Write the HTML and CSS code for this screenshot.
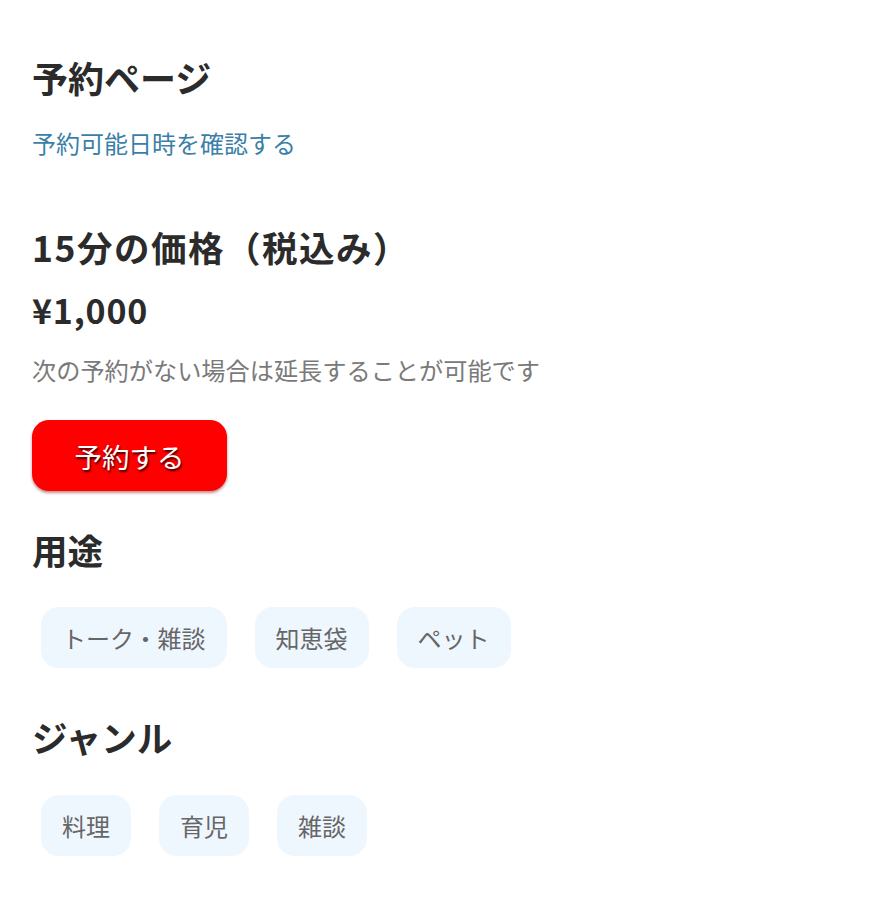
FILE: index.html
```html
<!DOCTYPE html>
<html lang="ja">
<head>
<meta charset="utf-8">
<title>予約ページ</title>
<link rel="stylesheet" href="styles.css">
</head>
<body>
<main class="page">
  <h1 class="title">予約ページ</h1>
  <a class="link" href="#">予約可能日時を確認する</a>

  <h2 class="heading price-heading">15分の価格（税込み）</h2>
  <p class="price">¥1,000</p>
  <p class="note">次の予約がない場合は延長することが可能です</p>
  <button class="reserve" type="button">予約する</button>

  <h2 class="heading section">用途</h2>
  <ul class="chips">
    <li class="chip">トーク・雑談</li>
    <li class="chip">知恵袋</li>
    <li class="chip">ペット</li>
  </ul>

  <h2 class="heading section genre">ジャンル</h2>
  <ul class="chips genre-chips">
    <li class="chip">料理</li>
    <li class="chip">育児</li>
    <li class="chip">雑談</li>
  </ul>
</main>
</body>
</html>
```
FILE: styles.css
```css
* { box-sizing: border-box; }
html, body { margin: 0; padding: 0; background: #ffffff; }
body {
  font-family: "Noto Sans CJK JP", "Noto Sans", sans-serif;
  color: #2b2b2b;
}
.page {
  padding: 52px 32px 40px 32px;
  display: flex;
  flex-direction: column;
  align-items: flex-start;
}
.title {
  margin: 0;
  font-size: 36px;
  line-height: 50px;
  font-weight: 700;
}
.link {
  margin-top: 24px;
  font-size: 24px;
  line-height: 34px;
  color: #3b7fa9;
  text-decoration: none;
}
.heading {
  margin: 0;
  font-size: 35.5px;
  line-height: 48px;
  font-weight: 700;
}
.price-heading { margin-top: 63px; letter-spacing: 1.5px; }
.price {
  margin: 15px 0 0 0;
  font-size: 34px;
  line-height: 48px;
  font-weight: 700;
  letter-spacing: 0.8px;
}
.note {
  margin: 19px 0 0 0;
  font-size: 24.2px;
  line-height: 34px;
  color: #7a7a7a;
}
.reserve {
  margin-top: 33px;
  width: 195px;
  height: 71px;
  border: none;
  border-radius: 17px;
  background: #fe0000;
  color: #ffffff;
  font-family: inherit;
  font-size: 27.5px;
  text-shadow: 1px 2px 2px rgba(50, 0, 0, 0.95);
  box-shadow: 0 2px 3px rgba(120, 0, 0, 0.45);
  padding: 0;
}
.section { margin-top: 35px; }
.genre { margin-top: 45px; }
.chips {
  list-style: none;
  margin: 33px 0 0 9px;
  padding: 0;
  display: flex;
  gap: 28px;
}
.genre-chips { margin-top: 34px; }
.chip {
  height: 61px;
  padding: 0 21px;
  display: flex;
  align-items: center;
  background: #eef6fe;
  border-radius: 18px;
  font-size: 24px;
  color: #666666;
}
```
